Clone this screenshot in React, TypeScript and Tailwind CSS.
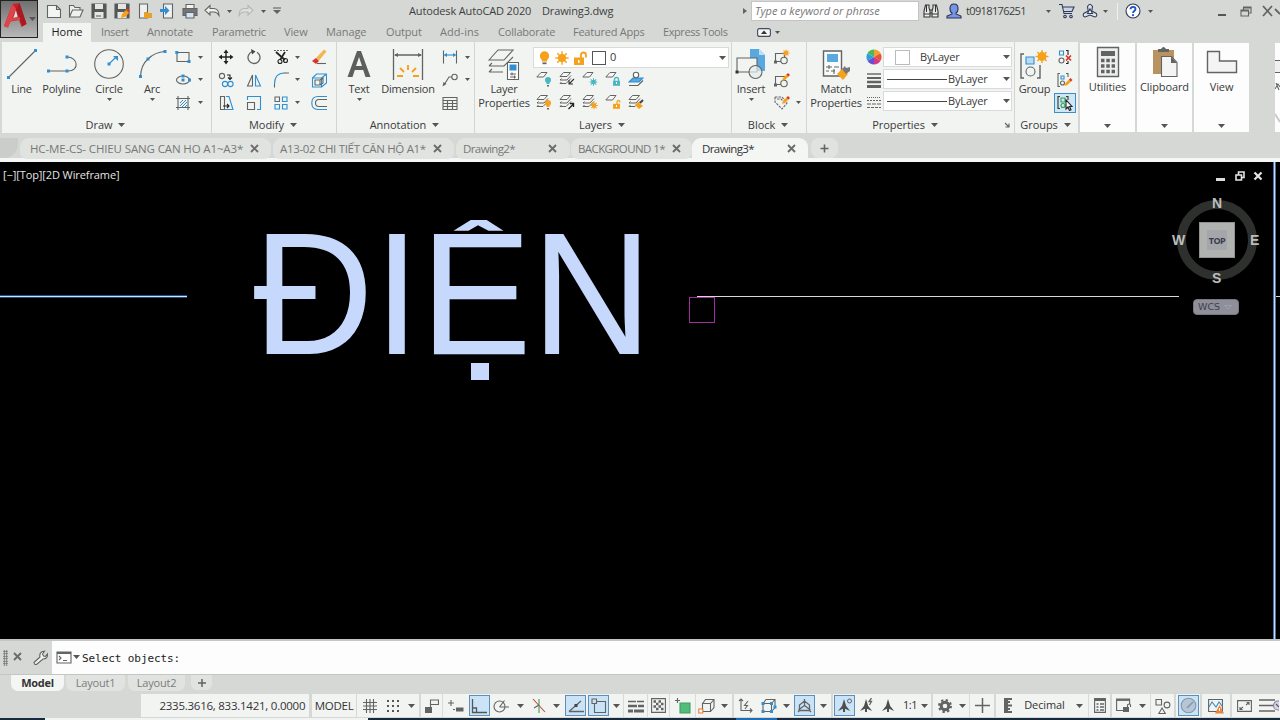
import type { ReactNode } from "react";
import clsx from "clsx";

const GRAY = "#626463";
const BLUE = "#2f8fd2";
const ORANGE = "#f5a11c";

type IconProps = { w?: number; h?: number; className?: string; children: ReactNode };

const Icon = ({ w = 16, h = 16, className, children }: IconProps) => (
  <svg
    width={w}
    height={h}
    viewBox={`0 0 ${w} ${h}`}
    fill="none"
    stroke={GRAY}
    strokeWidth={1.1}
    className={clsx("shrink-0", className)}
  >
    {children}
  </svg>
);

const Caret = ({ className }: { className?: string }) => (
  <svg width="7" height="4" viewBox="0 0 7 4" className={clsx("shrink-0", className)}>
    <path d="M0 0h7L3.500 4z" fill="#555" />
  </svg>
);

const SmallCaret = () => (
  <svg width="5" height="3" viewBox="0 0 5 3" className="shrink-0">
    <path d="M0 0h5L2.500 3z" fill="#555" />
  </svg>
);

const Dot = ({ x, y, c = BLUE }: { x: number; y: number; c?: string }) => (
  <rect x={x - 1.5} y={y - 1.5} width="3" height="3" fill={c} stroke="none" />
);

const Close = ({ className }: { className?: string }) => (
  <Icon w={9} h={9} className={className}>
    <path d="M1 1l7 7M8 1L1 8" strokeWidth="1.900" stroke="#6c6c6c" />
  </Icon>
);

/* ---------- title bar ---------- */

const Slot = ({ className, children }: { className: string; children?: ReactNode }) => (
  <div className={clsx("flex items-center justify-center shrink-0", className)}>{children}</div>
);

const AppLogo = () => (
  <div className="w-[38px] h-[38px] shrink-0 border border-[#222] bg-gradient-to-b from-[#707070] to-[#b8b8b8] flex items-start">
    <svg width="27" height="28" viewBox="0 0 27 28" className="shrink-0">
      <path
        d="M3 25 11.500 3l7-1 7 21-5 3-2.500-7-9 1.500-2 6z M15 9l-3.500 9 5.500-1.500z"
        fill="#c3242b"
        fillRule="evenodd"
      />
      <path d="M11.500 3 3 25l4 1.500L15 8z" fill="#e04349" />
      <path d="M18.500 2l7 21-4 2L15 8z" fill="#a81a21" />
      <path d="M14.800 9.500l1.700 6-4 1.500z" fill="#ecdcdb" />
      <path d="M7 21q7-4.500 12-3" fill="none" stroke="#e04349" strokeWidth="2.500" />
    </svg>
    <Caret className="ml-[1px] mt-[16px]" />
  </div>
);

const QuickAccess = () => (
  <div className="flex h-[21px] items-center">
    <Slot className="w-[22px] ml-[5px]">
      <Icon>
        <path d="M1.500 2.500h9l4 4v8h-13zM10.500 2.500v4h4" fill="#f4f4f4" />
      </Icon>
    </Slot>
    <Slot className="w-[22px]">
      <Icon>
        <path d="M1.500 14V2.500h4l1.500 2h5V7M1.500 14l3-7H15l-3 7z" fill="#f0f0f0" />
      </Icon>
    </Slot>
    <Slot className="w-[23px]">
      <Icon>
        <path d="M1 1h14v14H1z" fill="#565858" stroke="#565858" />
        <path d="M4 1h8v5H4zM3.500 9h9v6h-9z" fill="#e4e6e4" stroke="none" />
        <path d="M5 13h5" />
      </Icon>
    </Slot>
    <Slot className="w-[23px]">
      <Icon>
        <path d="M1 1h14v14H1z" fill="#565858" stroke="#565858" />
        <path d="M4 1h8v5H4zM3.500 9h9v6h-9z" fill="#e4e6e4" stroke="none" />
        <path d="M7 15l1-4 5-5 3 3-5 5z" fill={ORANGE} stroke="none" />
        <path d="M12 7l3 3 1-2-2-2z" fill="#d9402c" stroke="none" />
      </Icon>
    </Slot>
    <Slot className="w-[23px]">
      <Icon>
        <path d="M2.500 1h8v14h-8z" fill="#f0f0f0" />
        <path d="M7 9h3l1 1h4v5H7z" fill="#e8a128" stroke="none" />
      </Icon>
    </Slot>
    <Slot className="w-[22px]">
      <Icon>
        <path d="M4.500 1h9v14h-9z" fill="#f0f0f0" />
        <path d="M1 6h5V3l4.500 4.500L6 12V9H1z" fill={BLUE} stroke="none" />
      </Icon>
    </Slot>
    <Slot className="w-[24px]">
      <Icon>
        <path d="M4 1.500h8v4H4z" fill="#f4f4f4" />
        <path d="M1 5.500h14v7H1z" fill="#747676" />
        <path d="M4 9.500h8v5.500H4z" fill="#cfe4f4" />
      </Icon>
    </Slot>
    <Slot className="w-[20px]">
      <Icon>
        <path d="M6 2.500v3h4q5 .5 5 7-2-3.500-5-3.500H6v3L1 7.300z" fill="#f0f0f0" />
      </Icon>
    </Slot>
    <Slot className="w-[14px]">
      <SmallCaret />
    </Slot>
    <Slot className="w-[20px]">
      <Icon>
        <path d="M10 2.500v3H6q-5 .5-5 7 2-3.500 5-3.500h4v3l5-4.700z" stroke="#b4b6b4" fill="#dedfde" />
      </Icon>
    </Slot>
    <Slot className="w-[14px]">
      <SmallCaret />
    </Slot>
    <Slot className="w-[13px]">
      <Icon w={8} h={8}>
        <path d="M0 1h8" />
        <path d="M0 3h8L4 7z" fill={GRAY} stroke="none" />
      </Icon>
    </Slot>
  </div>
);

const TitleBar = () => (
  <div className="flex h-[22px] items-center text-[#3c3e3d]">
    <QuickAccess />
    <div className="ml-[126px] w-[122px] text-[11px] tracking-[-0.14px]">Autodesk AutoCAD 2020</div>
    <div className="ml-[11px] w-[72px] text-[11px] tracking-[-0.14px]">Drawing3.dwg</div>
    <Slot className="ml-[124px] w-[13px]">
      <Icon w={4} h={6}>
        <path d="M0 0l4 3-4 3z" fill={GRAY} stroke="none" />
      </Icon>
    </Slot>
    <div className="h-[20px] w-[168px] shrink-0 border border-[#c3c4c3] bg-white pl-[3px] text-[11px] italic leading-[17px] tracking-[0px] text-[#777]">
      Type a keyword or phrase
    </div>
    <Slot className="w-[24px]">
      <Icon>
        <g stroke="#333" fill="#eee">
          <path d="M2.500 2h3.500v3l1 3v6H1V8zM10 2h3.500L15 8v6H9V8l1-3zM7 7h2v3H7z" />
          <path d="M1 11h6M9 11h6M3.500 2v7M12.500 2v7" />
        </g>
      </Icon>
    </Slot>
    <Slot className="w-[22px]">
      <Icon>
        <path
          d="M8 1c6 0 4 8 2 9v1l5 2v2H1v-2l5-2v-1C4 9 2 1 8 1z"
          fill="#7795e8"
          stroke="#2b3350"
        />
      </Icon>
    </Slot>
    <div className="ml-[1px] w-[75px] text-[11px] tracking-[-0.63px]">t0918176251</div>
    <Slot className="w-[14px]">
      <SmallCaret />
    </Slot>
    <Slot className="w-[24px]">
      <Icon>
        <path d="M0 1.500h3l2 9h8M4 4h11l-2 4.500H4.500" stroke="#2f3a5a" fill="#c9d2e6" />
        <circle cx="6" cy="13.500" r="1.300" stroke="#2f3a5a" />
        <circle cx="12" cy="13.500" r="1.300" stroke="#2f3a5a" />
      </Icon>
    </Slot>
    <Slot className="w-[22px]">
      <Icon>
        <g stroke="#2f3a5a" fill="#dfe3ec">
          <path d="M5.500 3.500q2.500-4.500 5 0L9.800 8l4.500 2.500q1.500 3-1.500 3.500L8 12l-4.800 2q-3-.5-1.500-3.500L6.200 8z" />
          <path d="M8 6l2.500 4.500h-5z" fill="#fff" />
        </g>
      </Icon>
    </Slot>
    <Slot className="w-[9px]">
      <SmallCaret />
    </Slot>
    <div className="ml-[7px] mr-[7px] h-[17px] w-px bg-[#f0f0f0]" />
    <Slot className="w-[16px]">
      <Icon>
        <circle cx="8" cy="8" r="7" fill="#fff" stroke="#2f3a5a" />
        <path d="M5.500 6.300c0-3.200 5-3.200 5-.3C10.500 8 8 7.800 8 10" stroke="#1f55c4" strokeWidth="1.900" />
        <circle cx="8" cy="12.200" r="1.100" fill="#1f55c4" stroke="none" />
      </Icon>
    </Slot>
    <Slot className="w-[18px]">
      <SmallCaret />
    </Slot>
    <Slot className="ml-[51px] w-[24px] pt-[8px]">
      <div className="h-[2px] w-[8px] bg-[#555]" />
    </Slot>
    <Slot className="w-[24px]">
      <Icon w={12} h={11}>
        <path d="M1 4h7.500v6H1zM3.500 4V1H11v6H8.500M1 5h7M4 2h7" />
      </Icon>
    </Slot>
    <Slot className="w-[22px]">
      <Icon w={18} h={12} className="ml-[4px]">
        <path d="M1 1l9 10M10 1L1 11M13 4l5 5" strokeWidth="1.800" />
      </Icon>
    </Slot>
  </div>
);

const MenuTabs = () => (
  <div className="flex h-[19px] items-center text-[11px] text-[#767877]">
    <div className="ml-[5px] h-[19px] w-[48px] bg-[#f2f4f2] text-center leading-[18px] tracking-[0px] text-[#222]">
      Home
    </div>
    <div className="ml-[10px] w-[46px] tracking-[-0.35px]">Insert</div>
    <div className="w-[65px] tracking-[-0.15px]">Annotate</div>
    <div className="w-[72px] tracking-[-0.24px]">Parametric</div>
    <div className="w-[42px] tracking-[-0.12px]">View</div>
    <div className="w-[60px] tracking-[-0.12px]">Manage</div>
    <div className="w-[54px] tracking-[-0.15px]">Output</div>
    <div className="w-[58px] tracking-[0.05px]">Add-ins</div>
    <div className="w-[75px] tracking-[-0.18px]">Collaborate</div>
    <div className="w-[90px] tracking-[-0.24px]">Featured Apps</div>
    <div className="w-[94px] tracking-[-0.42px]">Express Tools</div>
    <Icon w={14} h={9}>
      <rect x=".6" y=".6" width="12.800" height="7.800" rx="2" fill="#f4f4f4" stroke="#444a60" />
      <path d="M4 6l3-3.500L10 6z" fill="#333" stroke="none" />
    </Icon>
    <div className="ml-[4px]">
      <SmallCaret />
    </div>
  </div>
);

/* ---------- ribbon building blocks ---------- */

type PanelProps = { title: string; className: string; launcher?: boolean; children: ReactNode };

const Panel = ({ title, className, launcher, children }: PanelProps) => (
  <section className={clsx("relative flex h-[91px] shrink-0 flex-col border-r border-[#d3d5d4] bg-[#f2f4f2]", className)}>
    <div className="flex h-[73px] pt-[4px]">{children}</div>
    <div className="flex h-[18px] items-center justify-center gap-[6px] pr-[2px] text-[11px] leading-none tracking-[-0.05px]">
      <span className={clsx(launcher && "ml-[-9px]")}>{title}</span>
      <Caret className="mt-px" />
      {launcher && (
        <Icon w={6} h={6} className="absolute bottom-[5px] right-[4px]">
          <path d="M1 1l4 4M5 1.500V5H1.500" />
        </Icon>
      )}
    </div>
  </section>
);

type BigProps = { label: ReactNode; className: string; arrow?: boolean; children: ReactNode };

const BigButton = ({ label, className, arrow, children }: BigProps) => (
  <div className={clsx("flex shrink-0 flex-col items-center", className)}>
    <div className="flex h-[36px] items-center justify-center">{children}</div>
    <div className="whitespace-nowrap text-center text-[11px] leading-[14px] tracking-[-0.18px]">{label}</div>
    {arrow && (
      <div className="mt-[2px]">
        <SmallCaret />
      </div>
    )}
  </div>
);

const Stack = ({ className, children }: { className: string; children: ReactNode }) => (
  <div className={clsx("grid h-[68px] shrink-0 grid-rows-3 place-items-center", className)}>{children}</div>
);

const LayerSheets = () => (
  <g strokeWidth="1">
    <path d="M1 5.500 4.500 1.500h7L8 5.500z" fill="#f8f8f8" />
    <path d="M1 9h7l4-4.500M1 12.500h6L12 7.500M1 9l1.500-1.500M1 12.500l1.500-1.500" />
  </g>
);

const OneSheet = () => <path d="M0.800 6 5 1.500h6L7.500 6z" strokeWidth="1" fill="#f8f8f8" />;

const Bulb = ({ c }: { c: string }) => (
  <g stroke="none">
    <circle cx="12" cy="9" r="3" fill={c} />
    <path d="M10.500 11h3v2h-3z" fill={c} />
    <path d="M11 14h2v1.500h-2z" fill="#666" />
  </g>
);

const Padlock = ({ c, open }: { c: string; open?: boolean }) => (
  <g>
    <path d={open ? "M12 10V8.500q0-2 1.500-2t1.500 2" : "M9.500 10V8.500q0-2 2-2t2 2V10"} stroke={c} strokeWidth="1.300" />
    <path d="M8 9.800h7v5H8z" fill={c} stroke="none" />
    <path d="M11 11h1v2h-1z" fill="#fff" stroke="none" />
  </g>
);

const Sun = ({ x, y, r, c = ORANGE }: { x: number; y: number; r: number; c?: string }) => (
  <g stroke={c}>
    <circle cx={x} cy={y} r={r * 0.6} fill={c} stroke="none" />
    {[0, 45, 90, 135].map((a) => (
      <path key={a} d={`M${x - r} ${y}H${x + r}`} transform={`rotate(${a} ${x} ${y})`} strokeWidth={r > 4 ? 1.4 : 1} />
    ))}
  </g>
);

const Pencil = ({ x, y }: { x: number; y: number }) => (
  <g stroke="none" transform={`translate(${x} ${y})`}>
    <path d="M0 8l1-3 4-4 2 2-4 4z" fill={ORANGE} />
    <path d="M4.500 1.500 6 0l2 2-1.500 1.500z" fill="#d9342b" />
  </g>
);

/* ---------- ribbon panels ---------- */

const DrawPanel = () => (
  <Panel title="Draw" className="w-[210px]">
    <BigButton label="Line" className="w-[39px]">
      <Icon w={32} h={32}>
        <path d="M2.500 29.500 29.500 2.500" />
        <Dot x={2.500} y={29.500} />
        <Dot x={29.500} y={2.500} />
      </Icon>
    </BigButton>
    <BigButton label="Polyline" className="w-[41px]">
      <Icon w={32} h={32}>
        <path d="M2 23h20c12 0 10-14-1-14" />
        <Dot x={2.500} y={23} />
        <Dot x={21} y={23} />
        <Dot x={21} y={9} />
      </Icon>
    </BigButton>
    <BigButton label="Circle" className="w-[54px]" arrow>
      <Icon w={32} h={32}>
        <circle cx="16" cy="16" r="14.300" />
        <path d="M16 16l7-7" stroke={BLUE} />
        <path d="M20 8h5v5z" fill={BLUE} stroke="none" />
        <Dot x={16} y={16} />
      </Icon>
    </BigButton>
    <BigButton label="Arc" className="w-[32px]" arrow>
      <Icon w={32} h={32}>
        <path d="M4.500 28.500Q5 17 12 11q7-7 17-7.500" />
        <Dot x={4.500} y={28.500} />
        <Dot x={12} y={11} />
        <Dot x={29} y={3.500} />
      </Icon>
    </BigButton>
    <Stack className="w-[30px]">
      <Icon>
        <path d="M2 3.500h12v9H2z" />
        <Dot x={1.800} y={3.500} />
        <Dot x={14} y={12.500} />
      </Icon>
      <Icon>
        <ellipse cx="8" cy="8" rx="6.500" ry="4" />
        <Dot x={8} y={8} />
        <Dot x={8} y={4} />
        <Dot x={14.500} y={8} />
      </Icon>
      <Icon>
        <path d="M1 3.500h14M1 12.500h14M3 1v14M13 1v14" />
        <path d="M5 8l3-3M5 11l6-6M7 12l5-5M10 12l2-2" stroke={BLUE} strokeWidth="1" />
      </Icon>
    </Stack>
    <Stack className="w-[5px]">
      <SmallCaret />
      <SmallCaret />
      <SmallCaret />
    </Stack>
  </Panel>
);

const ModifyPanel = () => (
  <Panel title="Modify" className="w-[125px]">
    <Stack className="w-[27px]">
      <Icon>
        <path d="M8 3v10M3 8h10" stroke="#222" strokeWidth="1.400" />
        <path
          d="M8 .5 5.500 4h5zM8 15.500 5.500 12h5zM.5 8 4 5.500v5zM15.500 8 12 5.500v5z"
          fill="#222"
          stroke="none"
        />
      </Icon>
      <Icon>
        <circle cx="4" cy="4" r="2.600" />
        <path d="M9 3h3v4M10 5.500l2 2 2-2" stroke="#222" />
        <circle cx="7" cy="12" r="2.600" stroke={BLUE} />
        <circle cx="12.500" cy="12" r="2.600" stroke={BLUE} />
      </Icon>
      <Icon>
        <path d="M2.500 1.500h4v13h-4z" />
        <path d="M8 1.500h3l4 13H7" stroke={BLUE} />
        <path d="M5 11h6M9 9l2 2-2 2" stroke="#222" />
      </Icon>
    </Stack>
    <Stack className="w-[29px]">
      <Icon>
        <path d="M11 3.300A6 6 0 1 1 6.500 2.700" strokeWidth="1.300" />
        <path d="M5 0l4.500 2.500L6 5.500z" fill="#444" stroke="none" />
      </Icon>
      <Icon>
        <path d="M1.500 14 6.500 3v11z" />
        <path d="M9.500 3v11h5z" stroke={BLUE} />
      </Icon>
      <Icon>
        <path d="M1.500 7.500h7v7h-7z" />
        <path d="M1.500 5V1.500h13v13H11" stroke={BLUE} />
      </Icon>
    </Stack>
    <Stack className="w-[26px]">
      <Icon>
        <path d="M1 1.500h14" stroke={GRAY} strokeDasharray="2 1" />
        <path d="M3 3l9 8M12 3l-5 8" stroke="#222" strokeWidth="1.700" />
        <circle cx="7" cy="12.500" r="2" stroke="#222" />
        <circle cx="12.500" cy="11.500" r="2" stroke="#222" />
      </Icon>
      <Icon>
        <path d="M1.500 12q0-11 10-11" stroke={BLUE} />
        <path d="M1.500 12v3.500M11 1h5" />
      </Icon>
      <Icon>
        <path d="M2 2h4.500v4.500H2z" />
        <path d="M9.500 2H14v4.500H9.500zM2 9.500h4.500V14H2zM9.500 9.500H14V14H9.500z" stroke={BLUE} />
      </Icon>
    </Stack>
    <Stack className="w-[7px]">
      <SmallCaret />
      <SmallCaret />
      <SmallCaret />
    </Stack>
    <Stack className="w-[35px]">
      <Icon>
        <path d="M5 9 13 .5l2.500 2L8 11.500z" fill="#f3b552" stroke="none" />
        <path d="M1 12l4-3 3 3-3 3z" fill="#d9342b" stroke="none" />
        <path d="M6 14.500h9" />
      </Icon>
      <Icon>
        <path d="M1.500 6h9v9h-9z" stroke={BLUE} />
        <path d="M1.500 6l4-4h10v9l-5 4M10.500 6l5-4" stroke={BLUE} />
        <path d="M4 8h5v5H4zM9 8l3-2v5l-3 2" />
      </Icon>
      <Icon>
        <path d="M16 4.500H8q-3.500 0-3.500 3.500t3.500 3.500h8" />
        <path d="M16 1.500H7Q.8 1.500.8 8T7 14.500h9" stroke={BLUE} />
      </Icon>
    </Stack>
  </Panel>
);

const AnnotationPanel = () => (
  <Panel title="Annotation" className="w-[138px]">
    <BigButton label="Text" className="w-[44px]" arrow>
      <Icon w={28} h={32}>
        <path
          d="M2.500 29 12 3h4l9.500 26h-5l-2.300-7H9.800l-2.300 7zM11 18h6l-3-9z"
          fill="#5d5f5e"
          fillRule="evenodd"
          stroke="none"
        />
      </Icon>
    </BigButton>
    <BigButton label="Dimension" className="w-[54px]">
      <Icon w={32} h={32}>
        <path d="M1.500 1v31M30.500 1v31M3 7h26" strokeWidth="1.300" />
        <path d="M2 7l4-2v4zM30 7l-4-2v4z" fill={GRAY} stroke="none" />
        <path d="M5 28h6M21 28h6M8 20l4 4M24 20l-4 4M16 17v5" stroke={ORANGE} strokeWidth="1.900" />
      </Icon>
    </BigButton>
    <Stack className="w-[30px]">
      <Icon>
        <path d="M1.500 1.500v13M14.500 1.500v13" />
        <path d="M3 6h10" stroke={BLUE} />
        <path d="M1.500 6 5 4v4zM14.500 6 11 4v4z" fill={BLUE} stroke="none" />
      </Icon>
      <Icon>
        <circle cx="12.500" cy="5" r="2.700" />
        <path d="M10 5H7l-5 8" />
        <path d="M.5 14.500 1.500 10l3 2z" fill={GRAY} stroke="none" />
      </Icon>
      <Icon>
        <path d="M1 2.500h14v12H1zM1 5.500h14M1 8.500h14M1 11.500h14M5.500 5v9M10.500 5v9" />
      </Icon>
    </Stack>
    <Stack className="w-[3px]">
      <SmallCaret />
      <SmallCaret />
      <span />
    </Stack>
  </Panel>
);

const LayerTools = () => (
  <div className="grid h-[45px] w-[114px] grid-cols-5 grid-rows-2 place-items-center">
    <Icon>
      <OneSheet />
      <Bulb c="#49b8c4" />
    </Icon>
    <Icon>
      <LayerSheets />
      <path d="M15 8l-4.500 4.500M10 9v4h4" stroke="#333" />
    </Icon>
    <Icon>
      <OneSheet />
      <Sun x={11.500} y={11} r={3.800} c="#49b8c4" />
    </Icon>
    <Icon>
      <OneSheet />
      <Padlock c="#49b8c4" />
    </Icon>
    <Icon>
      <path d="M1 11l4-4h10l-4 4z" fill="#58a9e0" stroke={BLUE} />
      <path d="M1 14.500h9l5-5" />
      <circle cx="8" cy="4" r="2.700" fill="#fff" />
    </Icon>
    <Icon>
      <LayerSheets />
      <Bulb c={ORANGE} />
    </Icon>
    <Icon>
      <LayerSheets />
      <path d="M9.500 15l5-5M11 9.500h3.500V13" stroke="#222" strokeWidth="1.300" />
    </Icon>
    <Icon>
      <LayerSheets />
      <Sun x={12} y={11.500} r={3.800} />
    </Icon>
    <Icon>
      <OneSheet />
      <Padlock c={ORANGE} open />
    </Icon>
    <Icon>
      <LayerSheets />
      <path d="M7 11l3-3 5 4-4 3z" fill={ORANGE} stroke="none" />
      <path d="M12 9l3-3" stroke="#444" strokeWidth="2" />
    </Icon>
  </div>
);

const LayersPanel = () => (
  <Panel title="Layers" className="w-[257px]">
    <BigButton
      label={
        <>
          Layer
          <br />
          Properties
        </>
      }
      className="w-[58px]"
    >
      <Icon w={32} h={32}>
        <path d="M1 12 10 2h15l-9 10zM1 18h15l9-9M1 24h14M1 18l3-3M1 24l3-3" fill="none" />
        <path d="M19.500 14.500h11v17h-11z" fill="#fff" />
        <path d="M21.500 16.500h7v6h-7z" fill={BLUE} stroke="none" />
        <path d="M22 26h6M22 29h6M24 24.500v3M26.500 27.500v3" />
      </Icon>
    </BigButton>
    <div className="flex flex-col">
      <div className="mt-[1px] flex h-[21px] w-[196px] items-center border border-[#d9dbda] bg-white pl-[5px] text-[11px]">
        <Icon w={11} h={14}>
          <circle cx="5.500" cy="5" r="4.700" fill={ORANGE} stroke="none" />
          <path d="M3 8h5v2.500H3z" fill={ORANGE} stroke="none" />
          <path d="M3.500 12.300h4" strokeWidth="1.800" />
        </Icon>
        <Icon w={14} h={14} className="ml-[5px]">
          <Sun x={7} y={7} r={6.700} />
        </Icon>
        <Icon w={14} h={14} className="ml-[4px]">
          <path d="M8 7V4q0-2.500 2.500-2.500T13 4v2.500" stroke={ORANGE} strokeWidth="1.800" />
          <path d="M1 6.500h10V14H1z" fill={ORANGE} stroke="none" />
          <path d="M5 9h1.500v3H5z" fill="#fff" stroke="none" />
        </Icon>
        <div className="ml-[5px] h-[14px] w-[14px] border border-[#555] bg-white" />
        <span className="ml-[4px]">0</span>
        <Caret className="ml-auto mr-[2px]" />
      </div>
      <LayerTools />
    </div>
  </Panel>
);

const BlockPanel = () => (
  <Panel title="Block" className="w-[75px]">
    <BigButton label="Insert" className="w-[38px]" arrow>
      <Icon w={32} h={32}>
        <path d="M15 1h9l6 6v16H15z" fill="#58a9e0" stroke="none" />
        <path d="M24 1v6h6z" fill="#bfe0f5" stroke="none" />
        <path d="M2 10h20v14H2z" fill="#f2f4f2" />
        <circle cx="20.500" cy="24" r="6.500" fill="#e4ebef" fillOpacity=".7" />
        <Dot x={2} y={24} c="#333" />
      </Icon>
    </BigButton>
    <Stack className="w-[24px]">
      <Icon>
        <path d="M1.500 4.500h9v8h-9z" />
        <circle cx="10" cy="11.500" r="3.200" fill="#f2f4f2" />
        <Sun x={12} y={4} r={3.500} />
        <Dot x={1.500} y={13} c={GRAY} />
      </Icon>
      <Icon>
        <path d="M1.500 4.500h9v8h-9z" />
        <circle cx="10" cy="11.500" r="3.200" fill="#f2f4f2" />
        <Pencil x={8} y={1} />
        <Dot x={1.500} y={13} c={GRAY} />
      </Icon>
      <Icon>
        <path d="M1 2h7l5 6-5 6-7-7zM3 4h4l4 4" strokeDasharray="2.500 1" />
        <Pencil x={8} y={1} />
      </Icon>
    </Stack>
    <Stack className="w-[8px]">
      <span />
      <span />
      <SmallCaret />
    </Stack>
  </Panel>
);

const ColorWheel = () => (
  <Icon>
    <g stroke="none">
      <path d="M8 8V.5A7.500 7.500 0 0 1 14.500 4.200z" fill="#f0a030" />
      <path d="M8 8l6.500-3.800a7.500 7.500 0 0 1 0 7.500z" fill="#e8542f" />
      <path d="M8 8l6.500 3.700A7.500 7.500 0 0 1 8 15.500z" fill="#d33a8c" />
      <path d="M8 8v7.500a7.500 7.500 0 0 1-6.500-3.800z" fill="#6c4fd0" />
      <path d="M8 8l-6.500 3.700a7.500 7.500 0 0 1 0-7.500z" fill="#2f9fe0" />
      <path d="M8 8 1.500 4.200A7.500 7.500 0 0 1 8 .5z" fill="#4cb85a" />
    </g>
  </Icon>
);

const LineSelect = () => (
  <div className="flex h-[20px] w-[129px] items-center border border-[#d9dbda] bg-white">
    <div className="ml-[3px] h-px w-[60px] bg-[#444]" />
    <span className="ml-[1px] tracking-[-0.15px]">ByLayer</span>
    <Caret className="ml-auto mr-[1px]" />
  </div>
);

const PropertiesPanel = () => (
  <Panel title="Properties" className="w-[208px]" launcher>
    <BigButton
      label={
        <>
          Match
          <br />
          Properties
        </>
      }
      className="w-[58px]"
    >
      <Icon w={32} h={32}>
        <path d="M3.500 3h18v25h-18z" fill="#fbfbfb" strokeWidth="1.400" />
        <path d="M7 6h11v8H7z" fill="#58a9e0" stroke="none" />
        <path d="M6 19h6M14 19h5M6 23h3M11 23h4M9 17v4M14 21v5" />
        <path d="M17 26l5-5 6 5-5 6z" fill={ORANGE} stroke="none" />
        <path d="M22 21l3-3 1 2 4-1v4l-4 3z" fill="#777" stroke="none" />
      </Icon>
    </BigButton>
    <Stack className="w-[18px]">
      <ColorWheel />
      <Icon>
        <path d="M1 2h14" strokeWidth="1.400" />
        <path d="M1 6h14" strokeWidth="2" />
        <path d="M1 10h14" strokeWidth="2.500" />
        <path d="M1 14.500h14" strokeWidth="3" />
      </Icon>
      <Icon>
        <path d="M1 2.500h14" strokeDasharray="1 1" />
        <path d="M1 5.500h14" strokeDasharray="2 1" />
        <path d="M1 9h14" strokeDasharray="4 1" />
        <path d="M1 12.500h14" strokeDasharray="3 1" />
      </Icon>
    </Stack>
    <div className="mt-[1px] flex flex-col gap-[2px] text-[11px]">
      <div className="flex h-[20px] w-[129px] items-center border border-[#d9dbda] bg-white">
        <div className="ml-[11px] h-[15px] w-[15px] border border-[#bbb] bg-white" />
        <span className="ml-[10px] tracking-[-0.15px]">ByLayer</span>
        <Caret className="ml-auto mr-[1px]" />
      </div>
      <LineSelect />
      <LineSelect />
    </div>
  </Panel>
);

const GroupsPanel = () => (
  <Panel title="Groups" className="w-[64px]">
    <BigButton label="Group" className="w-[39px]">
      <Icon w={32} h={32}>
        <path d="M5 6H2v24h3M18 30h3V17" strokeWidth="1.400" />
        <path d="M7 9h8v7H7z" fill="#b9dcf3" stroke={BLUE} />
        <circle cx="11.500" cy="23.500" r="4.500" />
        <Sun x={23} y={8.500} r={6.500} />
        <circle cx="23" cy="8.500" r="4.400" fill={ORANGE} stroke="none" />
      </Icon>
    </BigButton>
    <Stack className="w-[22px]">
      <Icon>
        <path d="M2.500 2h4v4h-4z" stroke={BLUE} />
        <circle cx="4.500" cy="11.500" r="2.500" />
        <path d="M9 1.500h2V6M11 12v2.500H9" stroke="#222" />
        <path d="M9 6.500l5 5M14 6.500l-5 5" stroke="#d9342b" strokeWidth="1.700" />
      </Icon>
      <Icon>
        <path d="M3 1.500H1v13h2M9 1.500h2V5" />
        <path d="M4 4h3v3H4z" stroke={BLUE} />
        <circle cx="5.500" cy="11" r="2" />
        <Pencil x={7.500} y={6} />
      </Icon>
      <div className="flex h-[20px] w-[22px] items-center justify-center border border-[#3c8fc7] bg-[#cfe6f5]">
        <Icon>
          <path d="M3 1.500H1v12h2M9 1.500h2V5" stroke="#333" />
          <path d="M4 3h4v4H4z" stroke="#2fa45a" />
          <circle cx="6" cy="10.500" r="2" stroke="#2fa45a" />
          <path d="M9 5v9l2-2 1.500 3.500 1.500-.8-1.500-3.200H15z" fill="#fff" stroke="#222" />
        </Icon>
      </div>
    </Stack>
  </Panel>
);

const Collapsed = ({ label, children }: { label: string; children: ReactNode }) => (
  <div className="mt-[1px] flex h-[89px] w-[55px] shrink-0 flex-col items-center bg-[#fcfdfc]">
    <div className="mt-[3px] flex h-[32px] items-center">{children}</div>
    <div className="mt-[2px] text-[11px] leading-[14px] tracking-[-0.1px]">{label}</div>
    <Caret className="mt-auto mb-[4px]" />
  </div>
);

const Ribbon = () => (
  <div className="flex h-[91px] pl-[2px] text-[#3a3a3a]">
    <DrawPanel />
    <ModifyPanel />
    <AnnotationPanel />
    <LayersPanel />
    <BlockPanel />
    <PropertiesPanel />
    <GroupsPanel />
    <div className="ml-[1px] flex gap-[2px]">
      <Collapsed label="Utilities">
        <Icon w={24} h={32}>
          <path d="M1.500 1.500h21v29h-21z" fill="#eee" strokeWidth="1.400" />
          <path d="M5 5h14v5H5z" fill={GRAY} stroke="none" />
          <path d="M5 14.500h14M5 20h14M5 25.500h14" strokeWidth="3.500" strokeDasharray="3.500 1.800" />
        </Icon>
      </Collapsed>
      <Collapsed label="Clipboard">
        <Icon w={26} h={32}>
          <path d="M1 4h21v24H1z" fill="#b8935f" stroke="none" />
          <path d="M6 6h11V3h-3q-2.500-4-5 0H6z" fill={GRAY} stroke="none" />
          <path d="M9.500 10.500h10l5.500 6v14H9.500z" fill="#f4f4f4" />
          <path d="M19 10.500V17h6z" fill={GRAY} stroke="none" />
        </Icon>
      </Collapsed>
      <Collapsed label="View">
        <Icon w={32} h={32}>
          <path d="M1.500 5.500h12v9.500h17v11.500h-29z" fill="#f4f4f4" strokeWidth="1.400" />
        </Icon>
      </Collapsed>
    </div>
    <div className="ml-auto mt-[1px] h-[89px] w-[5px] bg-[#fcfdfc]">
      <Icon w={5} h={89}>
        <path d="M0 17.500h5M0 29.500h5" />
        <path d="M0 18h5v11H0z" fill="#f0f0f0" stroke="none" />
        <path d="M0 46l3-5 2 3M1 40l3 7" />
        <path d="M0 71l5 8" stroke="#ccc" strokeWidth="2" />
      </Icon>
    </div>
  </div>
);

/* ---------- file tabs ---------- */

type FileTabProps = { name: string; className: string; textClass: string; closeClass: string; active?: boolean };

const FileTab = ({ name, className, textClass, closeClass, active }: FileTabProps) => (
  <div
    className={clsx(
      "flex h-[21px] shrink-0 items-center rounded-t-[9px]",
      active ? "bg-[#f4f6f4] text-[#333]" : "rounded-b-[7px] bg-[#e1e3e1] text-[#767877]",
      className,
    )}
  >
    <span className={clsx("whitespace-nowrap text-[11.500px]", textClass)}>{name}</span>
    <Close className={clsx("ml-auto", closeClass)} />
  </div>
);

const FileTabs = () => (
  <div className="flex h-[29px] items-start border-b-4 border-[#f5f7f6] pt-[5px]">
    <div className="mr-[2px] h-[20px] w-[18px] rounded-br-[14px] bg-[#cbcdcb]" />
    <FileTab name="HC-ME-CS- CHIEU SANG CAN HO A1~A3*" className="w-[251px]" textClass="ml-[10px] tracking-[-0.13px]" closeClass="mr-[12px]" />
    <FileTab name="A13-02 CHI TIẾT CĂN HỘ A1*" className="ml-[2px] w-[181px]" textClass="ml-[7px] tracking-[-0.32px]" closeClass="mr-[12px]" />
    <FileTab name="Drawing2*" className="ml-[2px] w-[114px]" textClass="ml-[7px] tracking-[-0.6px]" closeClass="mr-[13px]" />
    <FileTab name="BACKGROUND 1*" className="ml-[1px] w-[121px]" textClass="ml-[7px] tracking-[-0.6px]" closeClass="mr-[11px]" />
    <FileTab name="Drawing3*" className="w-[116px]" textClass="ml-[10px] tracking-[-0.6px]" closeClass="mr-[12px]" active />
    <div className="ml-[3px] flex h-[20px] w-[27px] items-center justify-center rounded-[8px] bg-[#e1e3e1]">
      <Icon w={9} h={9}>
        <path d="M4.500.5v8M.5 4.500h8" strokeWidth="1.600" />
      </Icon>
    </div>
  </div>
);

/* ---------- drawing area ---------- */

const ViewCube = () => (
  <div className="absolute left-[1172px] top-[34px] h-[122px] w-[90px] font-['Liberation_Sans'] text-[14px] font-bold leading-none text-[#bcbebc]">
    <div className="absolute left-[5px] top-[4px] h-[80px] w-[80px] rounded-full border-[9px] border-[#2e302e]" />
    <div className="absolute left-[27px] top-[26px] flex h-[36px] w-[36px] items-center justify-center border border-[#8f918f] bg-[#b0b2b0]">
      <div className="flex h-[20px] w-[20px] items-center justify-center bg-[#a4a6ac] font-['Open_Sans'] text-[9px] tracking-[-0.5px] text-[#3a3c48]">
        TOP
      </div>
    </div>
    <span className="absolute left-[40px] top-0">N</span>
    <span className="absolute left-[0px] top-[37px]">W</span>
    <span className="absolute left-[78px] top-[37px]">E</span>
    <span className="absolute left-[40px] top-[75px]">S</span>
    <div className="absolute left-[21px] top-[103px] flex h-[16px] w-[46px] items-center rounded-[4px] border border-[#77777f] bg-[#8f8f9a] pl-[4px] font-['DejaVu_Sans'] text-[9.500px] font-normal text-[#40404c]">
      WCS
      <svg width="8" height="5" viewBox="0 0 8 5" className="ml-[4px]">
        <path d="M.5.5h7L4 4z" fill="none" stroke="#a0a0ac" />
      </svg>
    </div>
  </div>
);

const Canvas = () => (
  <main className="relative h-[477px] overflow-hidden bg-black">
    <div className="absolute left-[3px] top-[6px] text-[11px] leading-[14px] tracking-[-0.1px] text-[#e4e4e4]">
      [−][Top][2D Wireframe]
    </div>
    <div className="absolute left-[1216px] top-[9px] flex items-center">
      <div className="mt-[6px] h-[3px] w-[9px] bg-[#ddd]" />
      <Icon w={10} h={10} className="ml-[10px]">
        <path d="M1 4h5.500v5H1zM3.500 4V1H9v5.500H6.500" stroke="#e4e4e4" strokeWidth="1.600" />
      </Icon>
      <Icon w={10} h={10} className="ml-[8px]">
        <path d="M1.500 1.500l7 7M8.500 1.500l-7 7" stroke="#e4e4e4" strokeWidth="2.200" />
      </Icon>
    </div>

    <div className="absolute left-0 top-[133px] h-[3px] w-[187px] border-y border-[#1f4f86] bg-[#cfe3fb]" />
    <div className="absolute left-[253px] top-[32px] origin-left scale-x-[0.955] whitespace-nowrap font-['Liberation_Sans'] text-[175px] leading-[200px] text-[#c6d9fc]">
      ĐIỆN
    </div>
    {/* flat accent and wide dot of the selected letter */}
    <svg width="70" height="34" viewBox="0 0 70 34" className="absolute left-[443px] top-[38px]">
      <path d="M0 0h70v33H0z" fill="#000" />
      <path d="M10.500 30.700 27.700 20h16l16.800 10.700H45.500L35 25.300 25.500 30.700z" fill="#c6d9fc" />
    </svg>
    <div className="absolute left-[466px] top-[199px] h-[28px] w-[28px] bg-black" />
    <div className="absolute left-[471px] top-[201px] h-[17px] w-[18px] bg-[#c6d9fc]" />
    <div className="absolute left-[697px] top-[134px] h-px w-[482px] bg-[#d8dad8]" />
    <div className="absolute left-[689px] top-[135px] h-[26px] w-[26px] border border-[#a02ea0]" />

    <div className="absolute left-[1273px] top-0 h-[477px] w-[3px] border-x border-[#4b72a0] bg-[#c4dcf5]" />
    <div className="absolute left-[1276px] top-[134px] h-px w-[4px] bg-[#d8dad8]" />
    <ViewCube />
  </main>
);

/* ---------- command line and layout tabs ---------- */

const CommandLine = () => (
  <div className="flex h-[35px] border-t-2 border-[#c4c6c4]">
    <div className="flex w-[52px] items-center bg-[#d6d8d6]">
      <div className="ml-[3px] h-[16px] w-[5px] bg-[radial-gradient(circle,#666_0.8px,transparent_1px)] bg-[size:2.500px_2.500px]" />
      <Close className="ml-[5px] mb-[2px]" />
      <Icon w={15} h={15} className="ml-[11px]">
        <path
          d="M1 12.500 7 7Q6 3 9.500 1.500l2-.3L9.500 4l1 2 2 .3 2-2.500q.5 5-4.500 5.200l-6.500 5.500q-2 .5-2.500-2z"
          fill="#f2f2f2"
        />
      </Icon>
    </div>
    <div className="flex flex-1 items-center bg-[#fcfdfc]">
      <Icon w={16} h={13} className="ml-[4px]">
        <path d="M1 1h14v11H1z" />
        <path d="M1 2h14" strokeWidth="2" />
        <path d="M3 5l2 2-2 2M7 9.500h4" />
      </Icon>
      <Caret className="ml-[1px] mb-[2px]" />
      <span className="ml-[2px] mt-[4px] font-['DejaVu_Sans_Mono',monospace] text-[11px] tracking-[-0.08px] text-[#222]">Select objects:</span>
    </div>
  </div>
);

const LayoutTabs = () => (
  <div className="flex h-[20px] items-start border-t border-[#c4c6c4] text-[11px] leading-[15px]">
    <div className="ml-[11px] h-[16px] w-[53px] rounded-b-[7px] bg-[#f4f6f4] text-center font-bold tracking-[-0.3px] text-[#333]">Model</div>
    <div className="ml-[2px] h-[16px] w-[59px] rounded-b-[7px] bg-[#e1e3e1] text-center tracking-[-0.2px] text-[#7b7d7b]">Layout1</div>
    <div className="ml-[3px] h-[16px] w-[57px] rounded-b-[7px] bg-[#e1e3e1] text-center tracking-[-0.2px] text-[#7b7d7b]">Layout2</div>
    <div className="ml-[6px] flex h-[15px] w-[21px] items-center justify-center rounded-b-[6px] bg-[#e1e3e1]">
      <Icon w={8} h={8}>
        <path d="M4 0v8M0 4h8" strokeWidth="1.500" />
      </Icon>
    </div>
  </div>
);

/* ---------- status bar ---------- */

type CellProps = { className: string; on?: boolean; divided?: boolean; children?: ReactNode };

const Cell = ({ className, on, divided, children }: CellProps) => (
  <div
    className={clsx(
      "flex h-[23px] shrink-0 items-center justify-center bg-[#f2f4f2]",
      divided && "border-r border-[#d9dbd9]",
      className,
    )}
  >
    {on ? (
      <div className="flex h-[21px] w-[21px] items-center justify-center border border-[#5f8fb8] bg-[#cbe3f7]">{children}</div>
    ) : (
      children
    )}
  </div>
);

const Gap = () => <div className="w-[2px] shrink-0" />;

const CompassMark = ({ children }: { children?: ReactNode }) => (
  <Icon w={15} h={15}>
    <path d="M7 1l2.200 7 4 5L8 10.800V14H6v-3.200L1 13l4-5z" fill="#4d4f4f" stroke="none" />
    {children}
  </Icon>
);

const StatusBar = () => (
  <div className="flex h-[23px] text-[#333]">
    <div className="ml-[141px] flex w-[169px] items-center justify-end bg-[#f2f4f2] pr-[4px] text-[11.500px] tracking-[-0.25px]">2335.3616, 833.1421, 0.0000</div>
    <div className="ml-[3px] mr-[1px] flex w-[44px] items-center justify-center bg-[#f2f4f2] text-[11.500px] tracking-[-0.3px]">MODEL</div>
    <Cell className="w-[26px]">
      <Icon w={14} h={14}>
        <path d="M3.500 0v14M7 0v14M10.500 0v14M0 3.500h14M0 7h14M0 10.500h14" />
      </Icon>
    </Cell>
    <Cell className="w-[20px]">
      <Icon w={12} h={12}>
        <path d="M0 1h12M0 6h12M0 11h12" strokeWidth="2" strokeDasharray="2 3" stroke="#555" />
      </Icon>
    </Cell>
    <Cell className="w-[16px]"><Caret /></Cell>
    <Gap />
    <Cell className="w-[22px]" divided>
      <Icon w={14} h={14}>
        <path d="M0 8h7v6H0z" fill={GRAY} stroke="none" />
        <path d="M5.500 8V1h8v4.500h-8" />
      </Icon>
    </Cell>
    <Cell className="w-[25px]">
      <Icon w={16} h={14}>
        <path d="M0 4h6M3 1v6" />
        <path d="M8 8.500h7.500v4H8z" fill={GRAY} stroke="none" />
        <path d="M5 10.500h2" />
      </Icon>
    </Cell>
    <Cell className="w-[22px]" on>
      <Icon w={16} h={16}>
        <path d="M1.500 1v13.500H16M1.500 10h4v4" stroke="#555" strokeWidth="1.300" />
      </Icon>
    </Cell>
    <Cell className="w-[22px]">
      <Icon w={16} h={14}>
        <circle cx="6.500" cy="7.500" r="5.500" />
        <path d="M6.500 8H16M6.500 8l5-6.500" />
      </Icon>
    </Cell>
    <Cell className="w-[16px]"><Caret /></Cell>
    <Cell className="w-[21px]">
      <Icon w={14} h={15}>
        <path d="M1 1l12 13" stroke="#c9403c" />
        <path d="M7 1v14" stroke="#3fa04a" />
        <path d="M2 10l5-3" />
      </Icon>
    </Cell>
    <Cell className="w-[15px]"><Caret /></Cell>
    <Cell className="w-[23px]" on>
      <Icon w={16} h={14}>
        <path d="M1 12.500h15M1 12.500 13 2" strokeWidth="1.300" />
        <Dot x={8} y={6.500} c="#444" />
      </Icon>
    </Cell>
    <Cell className="w-[23px]" on>
      <Icon>
        <path d="M3.500 3.500h11v11h-11z" />
        <path d="M1 1h4.500v4.500H1z" fill="#cbe3f7" />
      </Icon>
    </Cell>
    <Cell className="w-[14px]" divided><Caret /></Cell>
    <Cell className="w-[24px]" divided>
      <Icon w={16} h={14}>
        <path d="M0 2.500h8M9 2.500h7" strokeWidth="1.300" />
        <path d="M0 7h9M10 7h6" strokeWidth="2.400" />
        <path d="M0 12h5M6 12h10" strokeWidth="2.800" />
      </Icon>
    </Cell>
    <Cell className="w-[22px]" divided>
      <Icon w={15} h={15}>
        <path d="M.6.6h13.800v13.800H.6z" />
        <path d="M2.500 3.500h10M2.500 8.500h10" strokeWidth="2.400" strokeDasharray="2.500 2.500" />
        <path d="M5 6h8M5 11h8" strokeWidth="2.400" strokeDasharray="2.500 2.500" />
      </Icon>
    </Cell>
    <Cell className="w-[26px]" divided>
      <Icon>
        <path d="M5 5h10v10H5z" fill="#52bd78" stroke="#3f9d60" />
        <path d="M0 2.500h5M2.500 0v5" />
      </Icon>
    </Cell>
    <Cell className="w-[20px]">
      <Icon w={17}>
        <path d="M4.500 5.500h8v8h-8zM4.500 5.500l3-4H16v8l-3.500 4M12.500 5.500l3.500-4" />
        <path d="M.8 11h4v4h-4z" fill="#fff" stroke="#e8792c" />
      </Icon>
    </Cell>
    <Cell className="w-[16px]"><Caret /></Cell>
    <Gap />
    <Cell className="w-[22px]">
      <Icon w={15} h={15}>
        <path d="M3 13V1M1 3l2-2 2 2M3 12.500h11M12 10.500l2 2-2 2" />
        <path d="M10 3 6.500 7.500h3L7 11" />
      </Icon>
    </Cell>
    <Cell className="w-[24px]">
      <Icon w={17}>
        <path d="M3 5.500h8.500v8H3zM3 5.500l3-4h9v8l-3.500 4M11.500 5.500l3.500-4" />
        <Dot x={3} y={5.500} />
        <Dot x={3} y={13.500} />
        <Dot x={11.500} y={13.500} />
        <Dot x={11.500} y={5.500} />
        <Dot x={15} y={9} />
      </Icon>
    </Cell>
    <Cell className="w-[13px]"><Caret /></Cell>
    <Cell className="w-[22px]" on>
      <Icon w={15} h={15}>
        <path d="M7.500 1v6.500L1.500 12M7.500 7.500l6 4.500M7.500 3 2.500 7v5.500h10V7zM1 14l2-2M14 14l-2-2" strokeWidth="1.300" />
      </Icon>
    </Cell>
    <Cell className="w-[16px]"><Caret /></Cell>
    <Gap />
    <Cell className="w-[22px]" on>
      <CompassMark>
        <circle cx="12.500" cy="3" r="2" strokeWidth="1" />
      </CompassMark>
    </Cell>
    <Cell className="w-[22px]">
      <CompassMark>
        <path d="M12.500 0 10 3.500h2.500L10.500 7" strokeWidth="1.300" />
      </CompassMark>
    </Cell>
    <Cell className="w-[22px]"><CompassMark /></Cell>
    <Cell className="w-[22px] text-[11px] tracking-[-0.5px]">1:1</Cell>
    <Cell className="w-[10px]"><Caret className="mr-[4px]" /></Cell>
    <Gap />
    <Cell className="w-[23px]">
      <Icon w={14} h={14}>
        <circle cx="7" cy="7" r="3.800" strokeWidth="3" />
        <circle cx="7" cy="7" r="5.900" strokeWidth="2.200" strokeDasharray="2.300 2.330" />
      </Icon>
    </Cell>
    <Cell className="w-[14px]" divided><Caret /></Cell>
    <Cell className="w-[24px]">
      <Icon w={15} h={15}>
        <path d="M7.500 0v15M0 7.500h15" strokeWidth="1.500" />
      </Icon>
    </Cell>
    <Gap />
    <Cell className="w-[23px]">
      <Icon w={8} h={15}>
        <path d="M0 0h4v15H0z" fill={GRAY} stroke="none" />
        <path d="M0 1h8M0 4h6M0 7.500h8M0 11h6M0 14h8" strokeWidth="1.800" />
      </Icon>
    </Cell>
    <Cell className="w-[51px] text-[11px] tracking-[-0.1px]">Decimal</Cell>
    <Cell className="w-[19px]" divided><Caret /></Cell>
    <Cell className="w-[21px]">
      <Icon w={12} h={15}>
        <path d="M.6.6h10.800v13.800H.6z" />
        <path d="M1 2h10" strokeWidth="2" />
        <path d="M2.500 6h2M6 6h4M2.500 9h2M6 9h4M2.500 12h2M6 12h4" strokeWidth="1.300" />
      </Icon>
    </Cell>
    <Gap />
    <Cell className="w-[23px]">
      <Icon w={16} h={15}>
        <path d="M7 12.500H.6V1h13v5" />
        <path d="M1 2h13" strokeWidth="1.800" />
        <path d="M7 9h6v5H7z" fill={GRAY} stroke="none" />
        <path d="M11.500 9V7q2-2 3 0v2" />
      </Icon>
    </Cell>
    <Cell className="w-[16px]" divided><Caret /></Cell>
    <Cell className="w-[23px]">
      <Icon w={16} h={16}>
        <path d="M1 1.500h5.500V7H1zM7 10l3.300 5.500H3.800z" />
        <circle cx="12" cy="7" r="2.900" />
      </Icon>
    </Cell>
    <Gap />
    <Cell className="w-[24px]" on>
      <Icon w={17} h={17}>
        <circle cx="8.500" cy="8.500" r="7.300" fill="#b6c6d6" stroke="#8798a8" />
        <path d="M7 11l6-6" stroke="#8798a8" strokeWidth="1.700" />
      </Icon>
    </Cell>
    <Gap />
    <Cell className="w-[28px]">
      <Icon w={16} h={16}>
        <path d="M.6 1.500h13.800v12H.6z" />
        <path d="M1 9l3-5 4 5 3-5 3 4" stroke="#3d8cc0" />
        <path d="M11.500 7 16 15.500H7z" fill="#e88434" stroke="none" />
        <path d="M11.500 10v3" stroke="#fff" />
      </Icon>
    </Cell>
    <Gap />
    <Cell className="w-[25px]">
      <Icon w={15} h={12}>
        <path d="M.6.6h13.800v10.800H.6zM9 5l3-2.500M9.500 2.500H12V5M6 7 3 9.500M3 7v2.500h2.500" />
      </Icon>
    </Cell>
    <Cell className="w-[23px]">
      <Icon w={20} h={15}>
        <path d="M0 2h16M0 7.500h16M0 13h16" strokeWidth="1.700" />
        <circle cx="19" cy="7.500" r="4.500" fill="#d9d2ea" stroke="#8a7e9a" />
        <path d="M17 6l3 3" stroke="#555" />
      </Icon>
    </Cell>
  </div>
);

export default function App() {
  return (
    <div className="flex h-[720px] w-[1280px] flex-col overflow-hidden bg-[#d6d8d6] font-['Open_Sans',sans-serif] text-[11px]">
      <header className="flex h-[42px]">
        <AppLogo />
        <div className="flex flex-1 flex-col whitespace-nowrap">
          <TitleBar />
          <div className="mt-[1px]">
            <MenuTabs />
          </div>
        </div>
      </header>
      <Ribbon />
      <FileTabs />
      <Canvas />
      <CommandLine />
      <LayoutTabs />
      <StatusBar />
      <div className="mt-[1px] flex h-[2px] bg-[#17293f]">
        <div className="ml-[45px] h-full w-[323px] bg-[#f2f4f4]" />
        <div className="ml-[368px] h-full w-[41px] bg-[#1f6db5]" />
      </div>
    </div>
  );
}
